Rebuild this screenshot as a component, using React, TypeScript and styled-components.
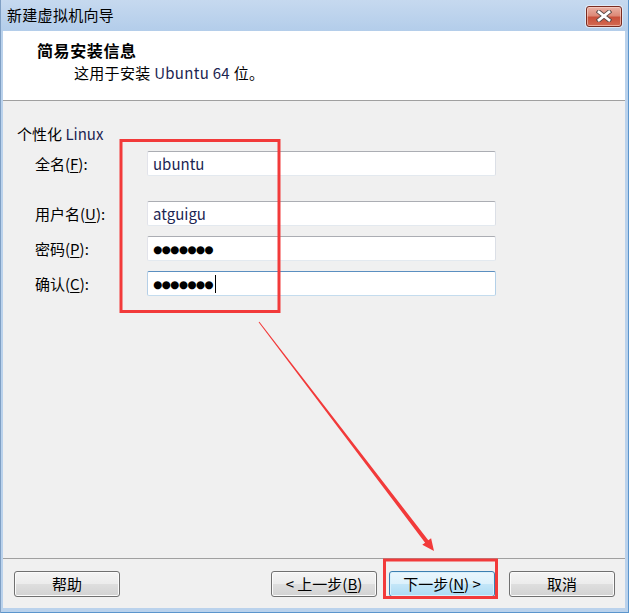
import React from 'react';
import styled, { createGlobalStyle, css } from 'styled-components';

const GlobalStyle = createGlobalStyle`
  html, body { margin: 0; padding: 0; background: #ffffff; }
  body {
    font-family: "Noto Sans CJK SC", "Noto Sans", sans-serif;
    font-size: 15px;
    color: #000;
  }
`;

const Window = styled.div`
  position: relative;
  width: 629px;
  height: 613px;
  box-sizing: border-box;
  display: flex;
  flex-direction: column;
  background: #bad2ec;
  box-shadow: inset 1px 0 #7f9fc4, inset -1px 0 #5b95cc, inset 0 -1px #5b95cc;
  overflow: hidden;
`;

const TitleBar = styled.div`
  height: 31px;
  flex: none;
  display: flex;
  align-items: center;
  justify-content: space-between;
  padding: 0 7px 0 7px;
  background: linear-gradient(#c6d9ef, #b3cdea);
  box-shadow: inset 1px 0 #7f9fc4, inset -1px 0 #5b95cc;
`;

const TitleText = styled.span`
  font-size: 15px;
  line-height: 20px;
  color: #000;
  letter-spacing: 0.3px;
  margin-top: -1px;
`;

const CloseButton = styled.div`
  width: 36px;
  height: 21px;
  margin-top: 1px;
  box-sizing: border-box;
  border: 1px solid #7a2b20;
  border-radius: 3px;
  background: linear-gradient(#eab0a4 0%, #dd8a78 45%, #c9503b 55%, #d36a52 100%);
  box-shadow: inset 0 0 0 1px rgba(255, 220, 210, 0.55), 0 0 0 1px rgba(255, 255, 255, 0.5);
  display: flex;
  align-items: center;
  justify-content: center;
`;

const Client = styled.div`
  flex: 1;
  display: flex;
  flex-direction: column;
  margin: 0 4px 5px 3px;
  min-height: 0;
`;

const Header = styled.div`
  height: 70px;
  box-sizing: border-box;
  flex: none;
  background: #ffffff;
  border-bottom: 1px solid #a0a0a0;
  padding: 9px 0 0 34px;
`;

const HeaderTitle = styled.div`
  font-size: 16px;
  font-weight: 700;
  line-height: 20px;
  letter-spacing: 0.6px;
`;

const HeaderSubtitle = styled.div`
  font-size: 15px;
  line-height: 20px;
  letter-spacing: 0.3px;
  margin: 3px 0 0 37px;
`;

const Latin = styled.span`
  color: #1c2552;
`;

const Body = styled.div`
  flex: 1;
  background: #f0f0f0;
  padding: 23px 0 0 14px;
`;

const SectionLabel = styled.div`
  font-size: 15px;
  line-height: 20px;
`;

const Form = styled.div`
  margin: 7px 0 0 18px;
  display: flex;
  flex-direction: column;
`;

const Row = styled.div<{ $mt?: number }>`
  display: grid;
  grid-template-columns: 112px 349px;
  align-items: center;
  height: 25px;
  margin-top: ${(p) => p.$mt ?? 0}px;
`;

const Label = styled.span`
  font-size: 15px;
  line-height: 25px;
`;

const Key = styled.span`
  text-decoration: underline;
  text-underline-offset: 2px;
`;

const Field = styled.div<{ $focused?: boolean }>`
  box-sizing: border-box;
  height: 25px;
  border: 1px solid;
  border-color: #abadb3 #dbdfe6 #e3e9ef #e2e3ea;
  border-radius: 2px;
  background: #ffffff;
  padding: 0 5px;
  display: flex;
  align-items: center;
  font-size: 15px;
  color: #1c2552;
  ${(p) =>
    p.$focused &&
    css`
      border-color: #5b8fc0 #b3d0e8 #c4dcee #b5cfe7;
    `}
`;

const Dots = styled.span`
  font-family: "DejaVu Sans", sans-serif;
  font-size: 10.5px;
  color: #000;
  letter-spacing: -0.6px;
  line-height: 20px;
`;

const Caret = styled.span`
  display: inline-block;
  width: 1px;
  height: 18px;
  background: #000;
  margin-left: 2px;
`;

const Footer = styled.div`
  flex: none;
  height: 50px;
  box-sizing: border-box;
  background: #f0f0f0;
  border-top: 1px solid #a0a0a0;
  padding: 12px 10px 0 11px;
  display: flex;
  align-items: flex-start;
`;

const Spacer = styled.div`
  flex: 1;
`;

const NavGroup = styled.div`
  display: flex;
  gap: 12px;
  margin-right: 14px;
`;

const Button = styled.div<{ $primary?: boolean }>`
  width: 106px;
  height: 26px;
  box-sizing: border-box;
  border: 1px solid #707070;
  border-radius: 3px;
  background: linear-gradient(#f4f4f4 0%, #ececec 48%, #dedede 52%, #d2d2d2 100%);
  box-shadow: inset 0 0 0 1px #fbfbfb;
  display: flex;
  align-items: center;
  justify-content: center;
  font-size: 15px;
  line-height: 20px;
  color: #000;
  ${(p) =>
    p.$primary &&
    css`
      border-color: #3c7fb1;
      background: linear-gradient(#eaf6fd 0%, #dcf1fc 48%, #c3e6f8 52%, #acdaf3 100%);
      box-shadow: inset 0 0 0 1px #d8f0fc;
    `}
`;

const Overlay = styled.svg`
  position: absolute;
  left: 0;
  top: 0;
  width: 629px;
  height: 613px;
  pointer-events: none;
`;

export default function App() {
  return (
    <>
      <GlobalStyle />
      <Window>
        <TitleBar>
          <TitleText>新建虚拟机向导</TitleText>
          <CloseButton>
            <svg width="16" height="12" viewBox="0 0 16 12">
              <path d="M3 2 L13 10 M13 2 L3 10" stroke="#5a4a48" strokeWidth="4.6" strokeLinecap="square" />
              <path d="M3 2 L13 10 M13 2 L3 10" stroke="#ffffff" strokeWidth="2.8" strokeLinecap="square" />
            </svg>
          </CloseButton>
        </TitleBar>
        <Client>
          <Header>
            <HeaderTitle>简易安装信息</HeaderTitle>
            <HeaderSubtitle>
              这用于安装 <Latin>Ubuntu 64</Latin> 位。
            </HeaderSubtitle>
          </Header>
          <Body>
            <SectionLabel>
              个性化 <Latin>Linux</Latin>
            </SectionLabel>
            <Form>
              <Row>
                <Label>
                  全名(<Key>F</Key>):
                </Label>
                <Field>ubuntu</Field>
              </Row>
              <Row $mt={25}>
                <Label>
                  用户名(<Key>U</Key>):
                </Label>
                <Field>atguigu</Field>
              </Row>
              <Row $mt={10}>
                <Label>
                  密码(<Key>P</Key>):
                </Label>
                <Field>
                  <Dots>●●●●●●●</Dots>
                </Field>
              </Row>
              <Row $mt={10}>
                <Label>
                  确认(<Key>C</Key>):
                </Label>
                <Field $focused>
                  <Dots>●●●●●●●</Dots>
                  <Caret />
                </Field>
              </Row>
            </Form>
          </Body>
          <Footer>
            <Button>帮助</Button>
            <Spacer />
            <NavGroup>
              <Button>
                &lt; 上一步(<Key>B</Key>)
              </Button>
              <Button $primary>
                下一步(<Key>N</Key>) &gt;
              </Button>
            </NavGroup>
            <Button>取消</Button>
          </Footer>
        </Client>
        <Overlay viewBox="0 0 629 613">
          <rect x="121" y="140.5" width="158" height="171" fill="none" stroke="#f23a3a" strokeWidth="3" />
          <rect x="384.5" y="560" width="112" height="37.5" fill="none" stroke="#f23a3a" strokeWidth="3" />
          <polygon
            points="258.6,322.3 259.4,321.7 428.3,540.3 431.1,538.2 434,551 422.3,544.8 425.1,542.7"
            fill="#f23a3a"
          />
        </Overlay>
      </Window>
    </>
  );
}
